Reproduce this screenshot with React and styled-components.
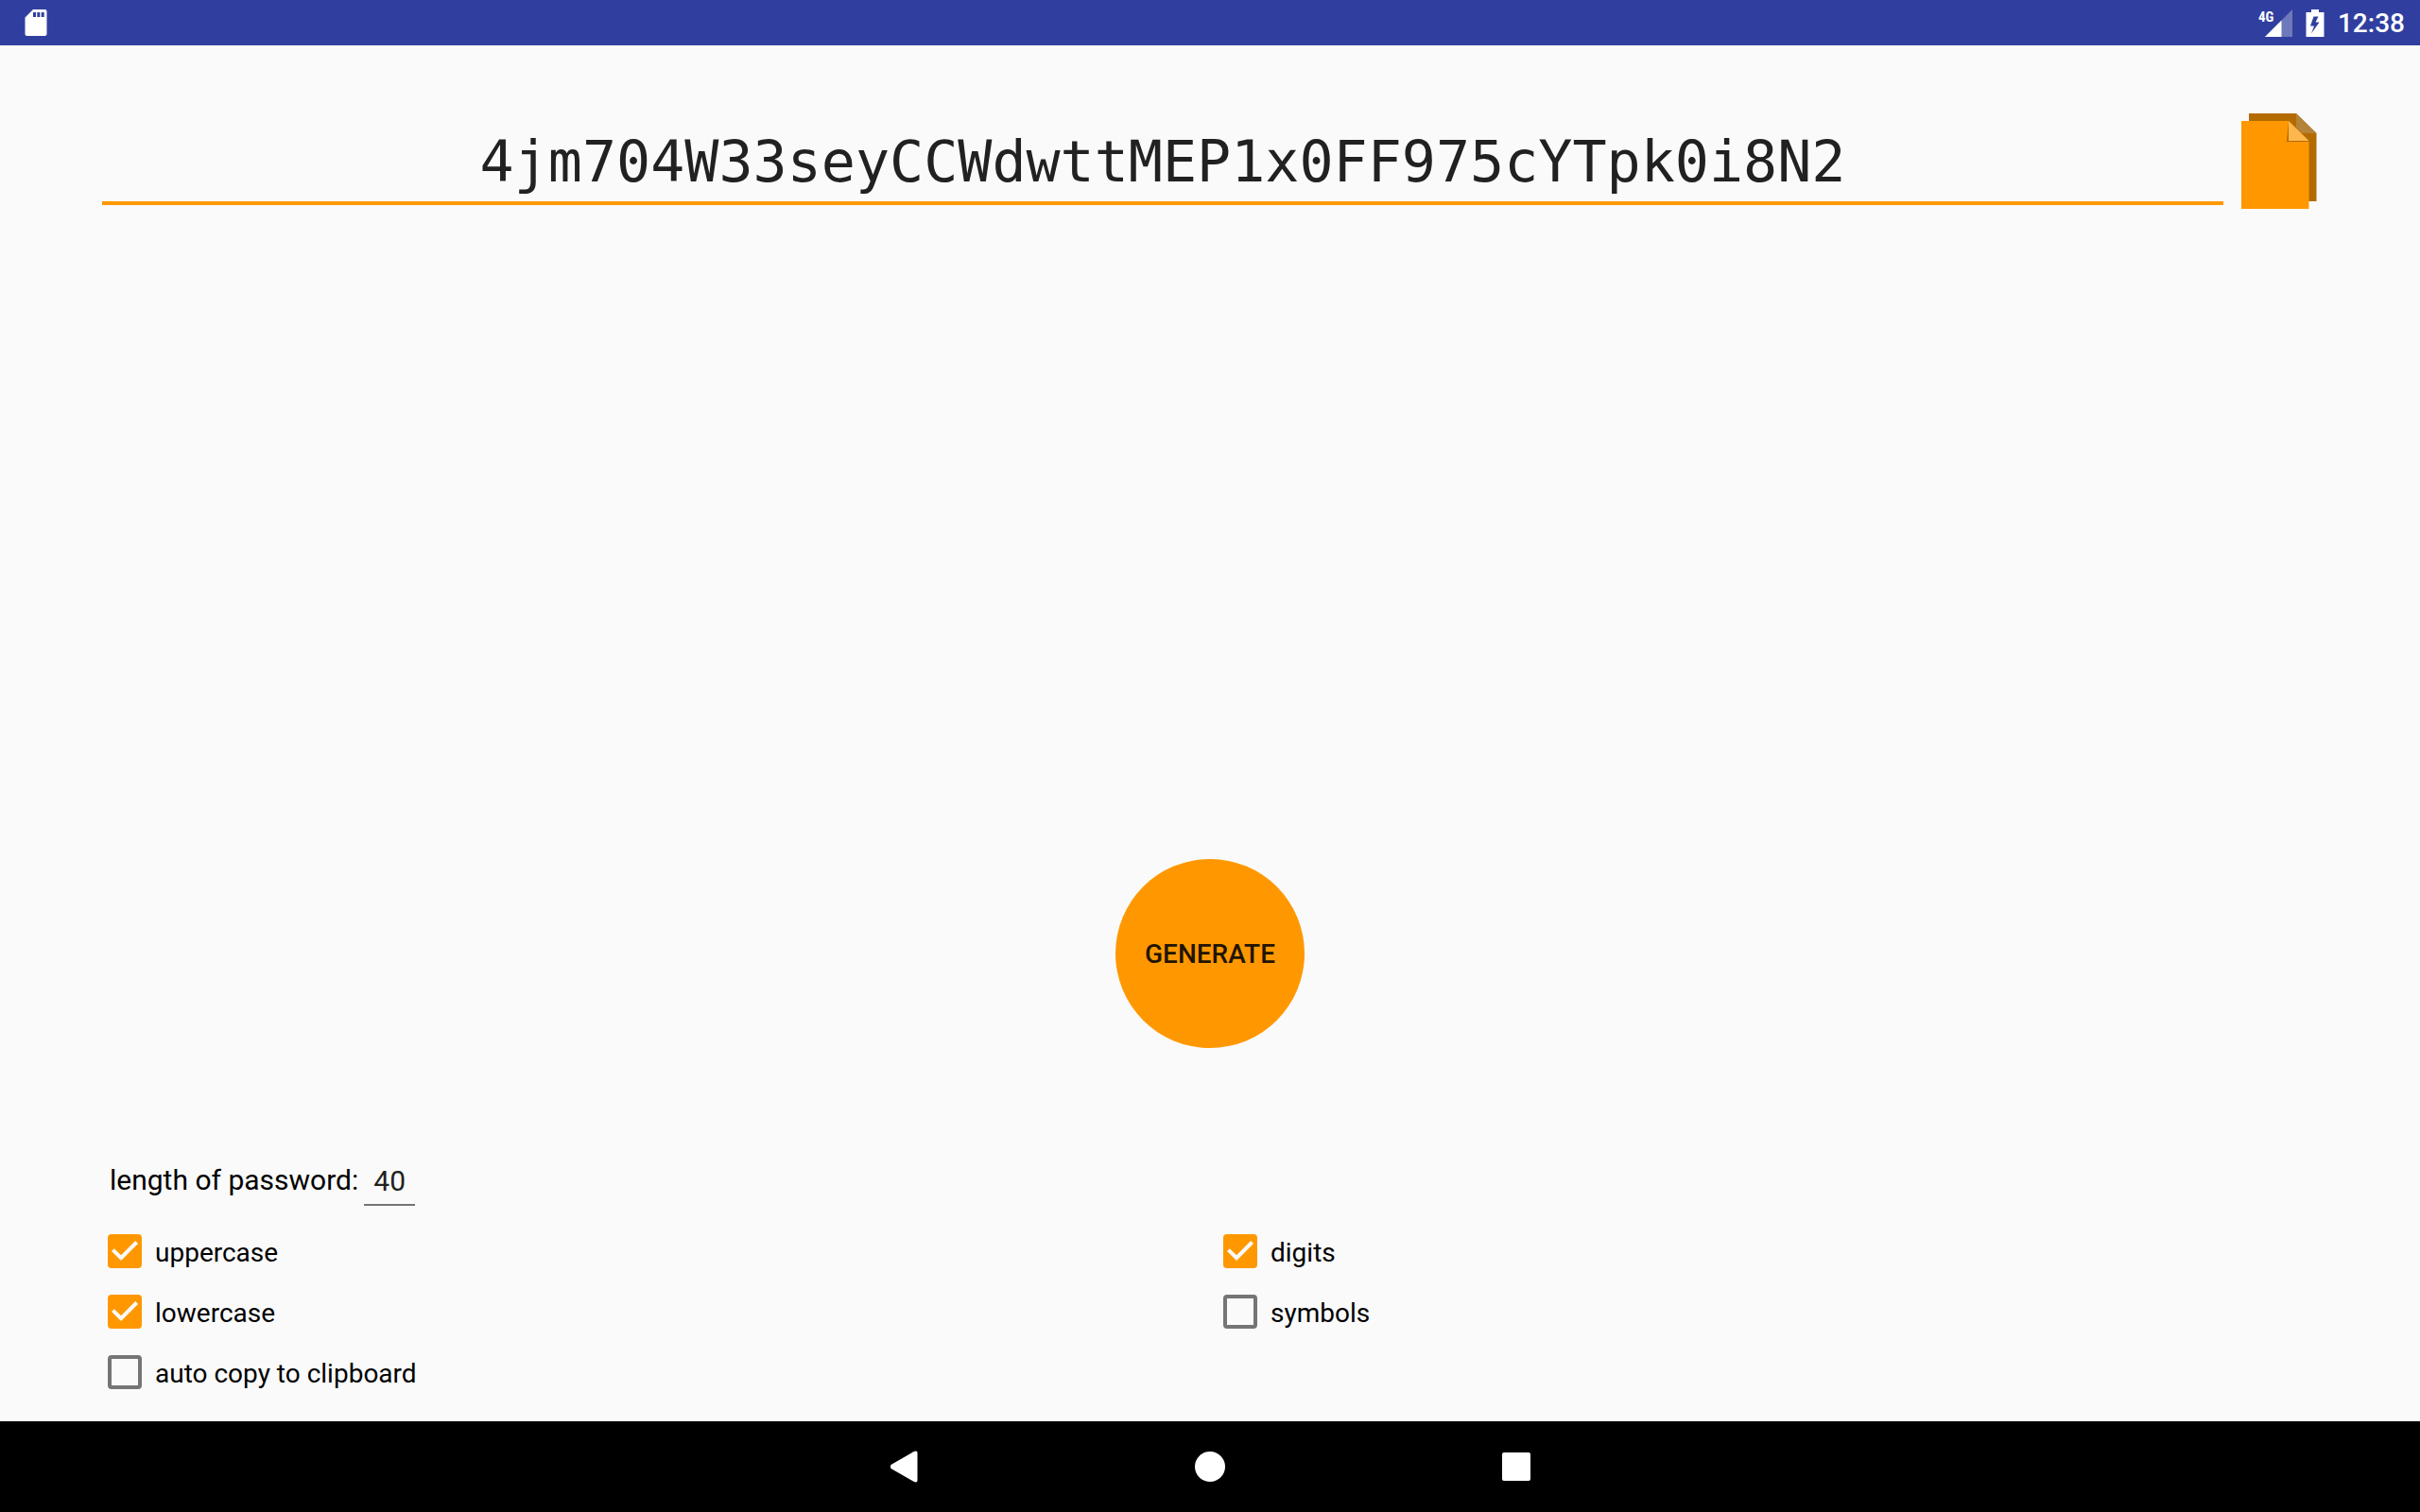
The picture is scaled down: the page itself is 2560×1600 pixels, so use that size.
import React, { useState } from "react";
import styled, { createGlobalStyle } from "styled-components";

const GlobalStyle = createGlobalStyle`
  * {
    box-sizing: border-box;
  }
  body {
    margin: 0;
    background-color: #fafafa;
    font-family: Roboto, "Liberation Sans", sans-serif;
  }
  button,
  input {
    font-family: inherit;
    margin: 0;
    padding: 0;
    border: 0;
    outline: 0;
    background: none;
  }
  button {
    cursor: pointer;
  }
`;

const Screen = styled.div`
  min-height: 100vh;
  display: flex;
  flex-direction: column;
`;

const StatusBar = styled.header`
  height: 48px;
  padding: 0 16px 0 24px;
  display: flex;
  align-items: center;
  justify-content: space-between;
  background-color: #303f9f;
  color: #fff;
  svg {
    display: block;
  }
`;

const StatusIcons = styled.div`
  display: flex;
  align-items: center;
  gap: 14px;
`;

const Clock = styled.time`
  font-size: 28px;
  font-weight: 500;
  line-height: 32px;
  padding-top: 2px;
`;

const Content = styled.main`
  flex: 1;
  padding: 64px 104px 20px;
  display: flex;
  flex-direction: column;
`;

const PasswordRow = styled.div`
  display: flex;
  align-items: flex-start;
  gap: 12px;
`;

const PasswordInput = styled.input`
  flex: 1;
  min-width: 0;
  height: 105px;
  margin: 0 4px;
  padding-top: 16px;
  border-bottom: 4px solid #ff9800;
  font-family: "DejaVu Sans Mono", monospace;
  font-size: 60px;
  text-align: center;
  color: #212121;
`;

const CopyButton = styled.button`
  width: 88px;
  height: 110px;
  padding: 8px 5px 0 0;
  svg {
    display: block;
    margin-left: auto;
  }
`;

const GenerateArea = styled.div`
  flex: 1;
  display: flex;
  align-items: flex-end;
  justify-content: center;
  padding-bottom: 112px;
`;

const GenerateButton = styled.button`
  width: 200px;
  height: 200px;
  border-radius: 50%;
  background-color: #ff9800;
  color: #211400;
  font-size: 28px;
  font-weight: 500;
  text-transform: uppercase;
`;

const LengthRow = styled.div`
  display: flex;
  align-items: flex-start;
  gap: 6px;
  padding-left: 12px;
  label {
    font-size: 30px;
    line-height: 36px;
    padding-top: 10px;
    color: #000;
  }
`;

const LengthInput = styled.input`
  width: 54px;
  height: 55px;
  padding-top: 4px;
  border-bottom: 2px solid #747474;
  font-size: 30px;
  text-align: center;
  color: #212121;
`;

const Options = styled.div`
  display: grid;
  grid-template-columns: 1fr 1fr;
  column-gap: 8px;
  padding-top: 16px;
`;

const Option = styled.label`
  height: 64px;
  padding-left: 10px;
  display: flex;
  align-items: center;
  gap: 14px;
  font-size: 28px;
  line-height: 32px;
  color: #000;
  span {
    padding-top: 4px;
  }
`;

const Tick = styled.input`
  appearance: none;
  width: 36px;
  height: 36px;
  border: 4px solid #757575;
  border-radius: 4px;
  display: grid;
  &:checked {
    border-color: #ff9800;
    background-color: #ff9800;
  }
  &:checked::before {
    content: "";
    background-color: #fafafa;
    clip-path: polygon(0% 50%, 10% 40%, 36% 65%, 90% 11%, 100% 21%, 36% 86%);
  }
`;

const NavBar = styled.nav`
  height: 96px;
  display: flex;
  align-items: center;
  justify-content: center;
  gap: 164px;
  background-color: #000;
  button {
    width: 160px;
    height: 96px;
    display: flex;
    align-items: center;
    justify-content: center;
  }
`;

const SdCardIcon = () => (
  <svg width="28" height="32" viewBox="0 0 28 32" fill="#fff">
    <path
      fillRule="evenodd"
      d="M11 2H23.500a2 2 0 0 1 2 2V28a2 2 0 0 1-2 2H4.500a2 2 0 0 1-2-2V10.500ZM11 5v5h3V5ZM15.300 5v5h3V5ZM19.700 5v5h3V5Z"
    />
  </svg>
);

const SignalIcon = () => (
  <svg width="36" height="32" viewBox="0 0 36 32">
    <path d="M36 2V31H7Z" fill="#fff" opacity="0.3" />
    <path d="M24.500 13.500V31H7Z" fill="#fff" />
    <text
      x="0"
      y="15"
      fill="#fff"
      fontFamily="'Roboto Condensed', Roboto, sans-serif"
      fontSize="15"
      fontWeight="700"
    >
      4G
    </text>
  </svg>
);

const BatteryIcon = () => (
  <svg width="20" height="32" viewBox="0 0 20 32" fill="#fff">
    <path
      fillRule="evenodd"
      d="M6 2H14V5H19.500V31H.500V5H6ZM8.500 9.500 5 19.500H9L6 27.500 14.500 15.500H10.500L13.500 9.500Z"
    />
  </svg>
);

const CopyIcon = () => (
  <svg width="80" height="102" viewBox="0 0 80 102">
    <path d="M8 0H58L79.500 21V93H8Z" fill="#b36b00" />
    <path d="M58 0 79.500 21H58Z" fill="#b58239" />
    <path d="M0 8H50L71.500 29V101H0Z" fill="#ff9800" />
    <path d="M50 8 48 30H72V28.500Z" fill="#b36b00" />
    <path d="M50 8 71.500 29H50Z" fill="#ffb74d" />
  </svg>
);

const BackIcon = () => (
  <svg width="30" height="34" viewBox="0 0 30 34" fill="#fff">
    <path d="M1.500 15 25.500 1.200Q29.500-.500 29.500 2.500V31.500Q29.500 34.500 25.500 32.800L1.500 19Q.500 17 1.500 15Z" />
  </svg>
);

const HomeIcon = () => (
  <svg width="32" height="32" viewBox="0 0 32 32" fill="#fff">
    <circle cx="16" cy="16" r="16" />
  </svg>
);

const RecentsIcon = () => (
  <svg width="30" height="30" viewBox="0 0 30 30" fill="#fff">
    <rect width="30" height="30" rx="2" />
  </svg>
);

const options = [
  { id: "uppercase", label: "uppercase" },
  { id: "digits", label: "digits" },
  { id: "lowercase", label: "lowercase" },
  { id: "symbols", label: "symbols" },
  { id: "autoCopy", label: "auto copy to clipboard" },
];

const sets = {
  uppercase: "ABCDEFGHIJKLMNOPQRSTUVWXYZ",
  lowercase: "abcdefghijklmnopqrstuvwxyz",
  digits: "0123456789",
  symbols: "!#$%&*+-=?@_",
};

export default function App() {
  const [password, setPassword] = useState(
    "4jm704W33seyCCWdwttMEP1x0FF975cYTpk0i8N2"
  );
  const [length, setLength] = useState("40");
  const [checked, setChecked] = useState({
    uppercase: true,
    lowercase: true,
    digits: true,
    symbols: false,
    autoCopy: false,
  });

  const copy = (text) => navigator.clipboard?.writeText(text);

  const generate = () => {
    const pool = Object.keys(sets)
      .filter((key) => checked[key])
      .map((key) => sets[key])
      .join("");
    if (!pool) return;
    const values = crypto.getRandomValues(new Uint32Array(Number(length) || 0));
    const next = Array.from(values, (v) => pool[v % pool.length]).join("");
    setPassword(next);
    if (checked.autoCopy) copy(next);
  };

  return (
    <Screen>
      <GlobalStyle />
      <StatusBar>
        <SdCardIcon />
        <StatusIcons>
          <SignalIcon />
          <BatteryIcon />
          <Clock>12:38</Clock>
        </StatusIcons>
      </StatusBar>
      <Content>
        <PasswordRow>
          <PasswordInput
            type="text"
            aria-label="password"
            spellCheck={false}
            value={password}
            onChange={(e) => setPassword(e.target.value)}
          />
          <CopyButton aria-label="copy" onClick={() => copy(password)}>
            <CopyIcon />
          </CopyButton>
        </PasswordRow>
        <GenerateArea>
          <GenerateButton onClick={generate}>Generate</GenerateButton>
        </GenerateArea>
        <LengthRow>
          <label htmlFor="length">length of password:</label>
          <LengthInput
            id="length"
            inputMode="numeric"
            value={length}
            onChange={(e) => setLength(e.target.value)}
          />
        </LengthRow>
        <Options>
          {options.map(({ id, label }) => (
            <Option key={id}>
              <Tick
                type="checkbox"
                checked={checked[id]}
                onChange={(e) =>
                  setChecked({ ...checked, [id]: e.target.checked })
                }
              />
              <span>{label}</span>
            </Option>
          ))}
        </Options>
      </Content>
      <NavBar>
        <button aria-label="back">
          <BackIcon />
        </button>
        <button aria-label="home">
          <HomeIcon />
        </button>
        <button aria-label="recent apps">
          <RecentsIcon />
        </button>
      </NavBar>
    </Screen>
  );
}
